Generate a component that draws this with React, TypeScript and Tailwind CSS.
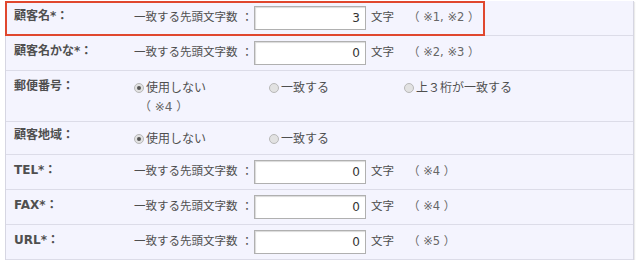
import React from 'react'

const font = { fontFamily: '"DejaVu Sans", "Noto Sans CJK JP", sans-serif' }

function Radio({ checked, label }: { checked?: boolean; label: string }) {
  return (
    <span className="flex items-center">
      <span className="flex h-[10px] w-[10px] items-center justify-center rounded-full border border-[#b8b8b8] bg-[#e2e2e2]">
        {checked && <span className="h-[4px] w-[4px] rounded-full bg-[#555]" />}
      </span>
      <span className="ml-[2px]">{label}</span>
    </span>
  )
}

function CountRow({ label, value, note }: { label: string; value: string; note: string }) {
  return (
    <div className="flex border-b border-[#dcdce8] bg-[#f4f4fe]">
      <div className="w-[120px] shrink-0 pl-2 pt-[7px] text-[12px] font-bold leading-4 text-[#4f4f4f]">{label}</div>
      <div className="flex items-center py-[5px] pl-2 text-[11.5px] text-[#4f4f4f]">
        <span className="w-[120px]">一致する先頭文字数 ：</span>
        <input
          readOnly
          value={value}
          className="h-[24px] w-[112px] border border-[#b0b0b0] bg-white pr-[5px] text-right text-[12px] text-[#333] shadow-[inset_1px_1px_1px_rgba(0,0,0,0.15)] outline-none"
        />
        <span className="ml-[5px]">文字</span>
        <span className="ml-[14px] text-[#666]">{note}</span>
      </div>
    </div>
  )
}

export default function App() {
  return (
    <div className="bg-white pl-[5px] pr-[6px] pt-[1px]" style={font}>
      <div className="border-l border-r border-[#d6d6e2] shadow-[1px_1px_1px_rgba(0,0,0,0.08)]">
        <div className="relative">
          <CountRow label="顧客名*：" value="3" note="（ ※1, ※2 ）" />
          <div className="pointer-events-none absolute left-[-1px] top-0 h-[35px] w-[480px] border-[2px] border-[#e0472e]" />
        </div>
        <CountRow label="顧客名かな*：" value="0" note="（ ※2, ※3 ）" />
        <div className="flex h-[51px] border-b border-[#dcdce8] bg-[#f4f4fe]">
          <div className="w-[120px] shrink-0 pl-2 pt-[7px] text-[12px] font-bold leading-4 text-[#4f4f4f]">郵便番号：</div>
          <div className="pl-2 pt-[9px] text-[12px] leading-4 text-[#4f4f4f]">
            <div className="flex items-start">
              <span className="w-[135px]"><Radio checked label="使用しない" /></span>
              <span className="w-[135px]"><Radio label="一致する" /></span>
              <Radio label="上３桁が一致する" />
            </div>
            <div className="mt-[3px] pl-[5px] text-[#666]">（ ※4 ）</div>
          </div>
        </div>
        <div className="flex h-[33px] border-b border-[#dcdce8] bg-[#f4f4fe]">
          <div className="w-[120px] shrink-0 pl-2 pt-[5px] text-[12px] font-bold leading-4 text-[#4f4f4f]">顧客地域：</div>
          <div className="flex items-start pl-2 pt-[9px] text-[12px] leading-4 text-[#4f4f4f]">
            <span className="w-[135px]"><Radio checked label="使用しない" /></span>
            <Radio label="一致する" />
          </div>
        </div>
        <CountRow label="TEL*：" value="0" note="（ ※4 ）" />
        <CountRow label="FAX*：" value="0" note="（ ※4 ）" />
        <CountRow label="URL*：" value="0" note="（ ※5 ）" />
      </div>
    </div>
  )
}
